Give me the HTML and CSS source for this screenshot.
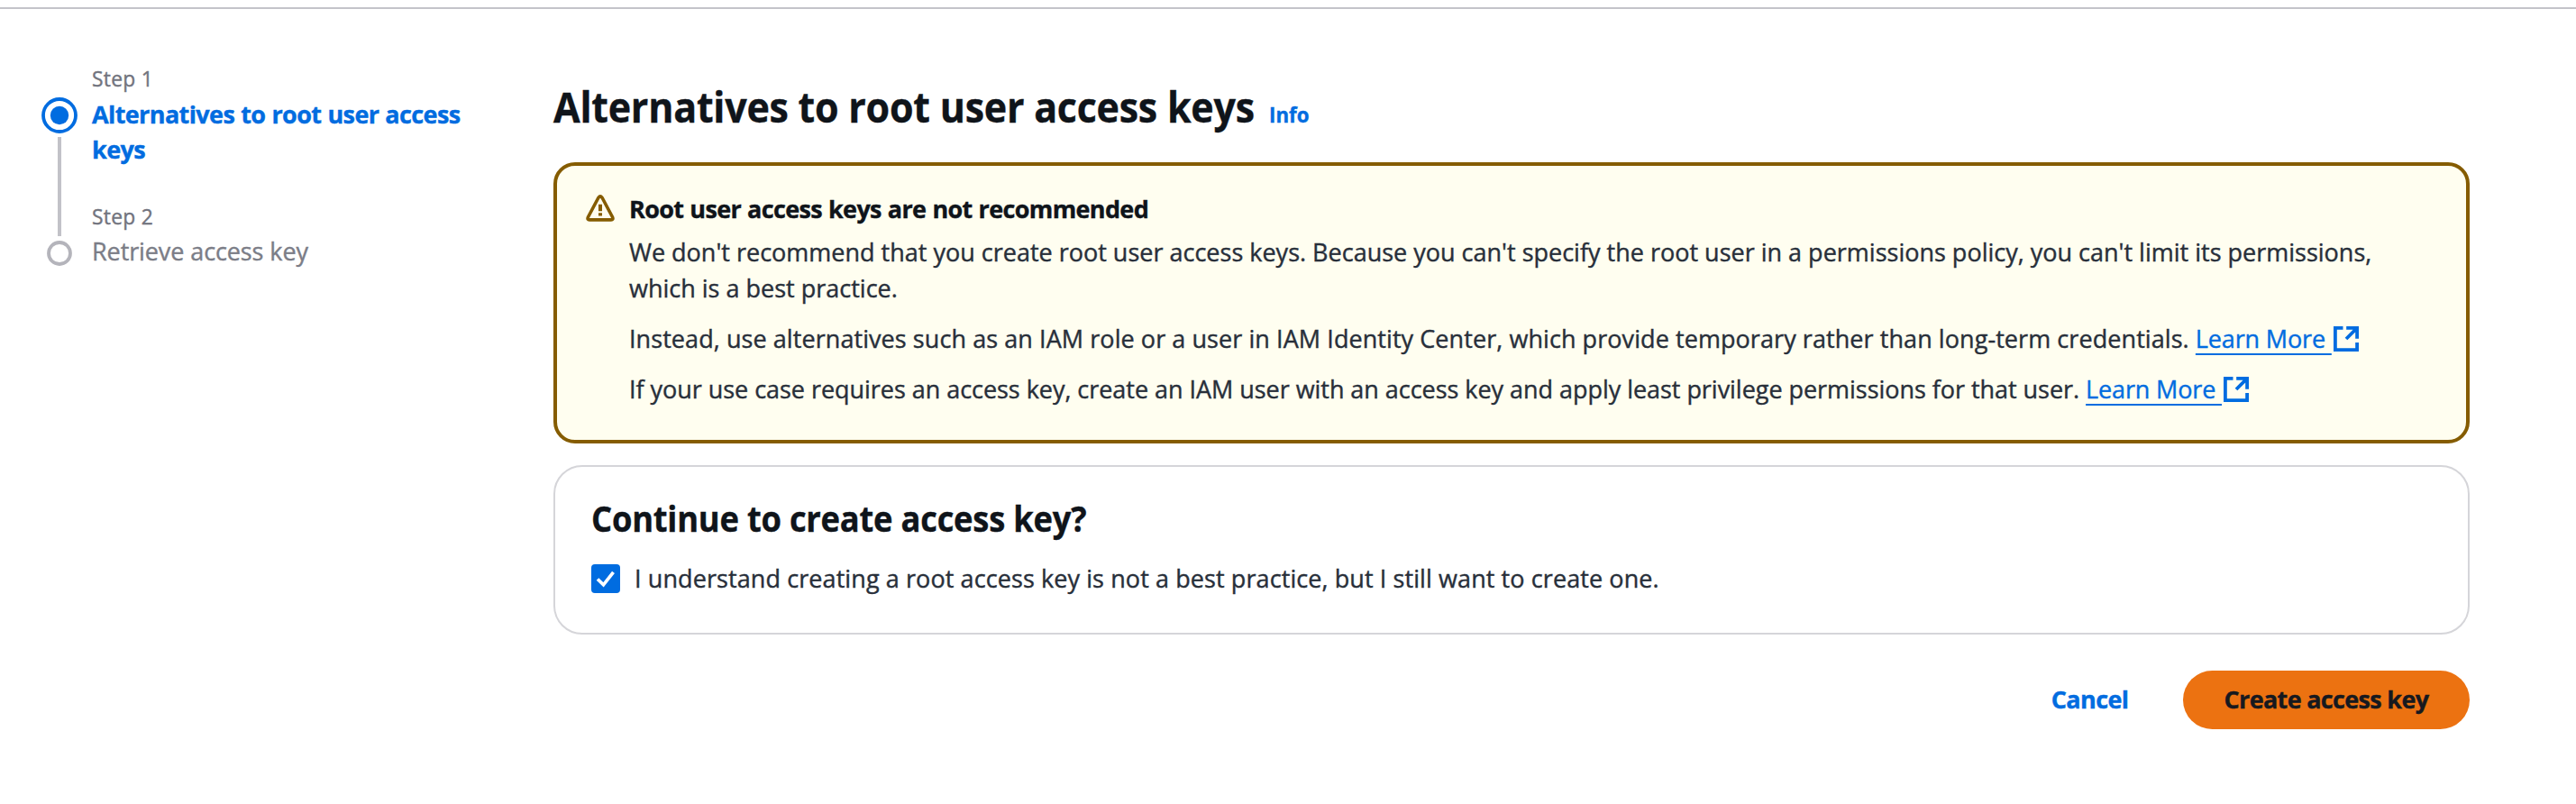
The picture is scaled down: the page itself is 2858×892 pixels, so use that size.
FILE: index.html
```html
<!DOCTYPE html>
<html lang="en">
<head>
<meta charset="utf-8">
<title>Create access key</title>
<link rel="stylesheet" href="styles.css">
</head>
<body>
<div class="topline"></div>
<div class="layout">
  <nav class="steps">
    <div class="step">
      <div class="step-label">Step 1</div>
      <div class="step-marker">
        <svg class="dot-active" viewBox="0 0 40 40"><circle cx="20" cy="20" r="18" fill="none" stroke="#006ce0" stroke-width="3.8"/><circle cx="20" cy="20" r="10.2" fill="#006ce0"/></svg>
        <span class="step-line"></span>
      </div>
      <a class="step-title active">Alternatives to root user access keys</a>
    </div>
    <div class="step">
      <div class="step-label">Step 2</div>
      <div class="step-marker next">
        <svg class="dot" viewBox="0 0 28 28"><circle cx="14" cy="14" r="12" fill="none" stroke="#b4b4bb" stroke-width="3.8"/></svg>
      </div>
      <span class="step-title">Retrieve access key</span>
    </div>
  </nav>
  <main class="main">
    <header class="page-header">
      <h1>Alternatives to root user access keys</h1>
      <a class="info">Info</a>
    </header>
    <section class="alert">
      <svg class="warn" viewBox="0 0 32 32" fill="none" stroke="#855c00"><path stroke-width="3.6" d="M14 4.2Q16 1.5 18 4.2L29.6 26Q30.8 28.9 28 28.9H4Q1.2 28.9 2.4 26Z"/><path stroke-width="4" d="M16 11.7v7.6M16 21.3v3.2"/></svg>
      <div class="alert-body">
        <h2 class="alert-title">Root user access keys are not recommended</h2>
        <p class="p1">We don't recommend that you create root user access keys. Because you can't specify the root user in a permissions policy, you can't limit its permissions, which is a best practice.</p>
        <p class="p2">Instead, use alternatives such as an IAM role or a user in IAM Identity Center, which provide temporary rather than long-term credentials. <a class="link"><span class="u">Learn More&nbsp;</span><svg class="ext" viewBox="0 0 28 28" fill="none" stroke="#006ce0" stroke-width="3.8"><path d="M10.5 1.9H1.9V26.1H26.1V18"/><path d="M14.2 1.9H26.1V13.8M26.1 1.9 14 14"/></svg></a></p>
        <p class="p3">If your use case requires an access key, create an IAM user with an access key and apply least privilege permissions for that user. <a class="link"><span class="u">Learn More&nbsp;</span><svg class="ext" viewBox="0 0 28 28" fill="none" stroke="#006ce0" stroke-width="3.8"><path d="M10.5 1.9H1.9V26.1H26.1V18"/><path d="M14.2 1.9H26.1V13.8M26.1 1.9 14 14"/></svg></a></p>
      </div>
    </section>
    <section class="card">
      <h2 class="card-title">Continue to create access key?</h2>
      <label class="check">
        <svg class="box" viewBox="0 0 32 32"><rect width="32" height="32" rx="4" fill="#006ce0"/><path d="M7 16.5 13.5 22.8 24.5 8.8" fill="none" stroke="#fff" stroke-width="3.7"/></svg>
        <span class="check-text">I understand creating a root access key is not a best practice, but I still want to create one.</span>
      </label>
    </section>
    <footer class="actions">
      <a class="cancel">Cancel</a>
      <button class="primary">Create access key</button>
    </footer>
  </main>
</div>
</body>
</html>
```
FILE: styles.css
```css
* { box-sizing: border-box; }
body {
  margin: 0;
  padding-top: 8px;
  background: #fff;
  color: #282f3a;
  font: 400 27px/39.5px "Open Sans", sans-serif;
  -webkit-text-stroke: .4px currentColor;
}
h1, h2, p { margin: 0; }
.topline { height: 2px; background: #c4c4ca; }
.layout { display: flex; padding-left: 46px; }

.steps { width: 568px; padding-top: 57px; flex: none; }
.step {
  display: grid;
  grid-template-columns: 40px 430px;
  column-gap: 16px;
}
.step + .step { margin-top: 34px; }
.step-label {
  grid-column: 2;
  height: 39px;
  font-size: 22.8px;
  line-height: 41px;
  letter-spacing: .3px;
  color: #72747e;
}
.step-marker {
  display: flex;
  flex-direction: column;
  align-items: center;
  gap: 4px;
  padding-top: 2px;
  height: 79px;
}
.step-marker.next { padding-top: 8px; }
.dot-active { width: 40px; height: 40px; flex: none; }
.dot { width: 28px; height: 28px; flex: none; }
.step-line { width: 4px; height: 110px; flex: none; background: #c2c2c8; }
.step-title { padding-top: .5px; color: #7b7d87; letter-spacing: -.1px; }
.step-title.active {
  color: #006ce0;
  font-weight: 700;
  letter-spacing: -.61px;
  word-spacing: .6px;
}

.main { width: 2126px; padding-top: 78px; }
.page-header { display: flex; align-items: baseline; gap: 17px; height: 92px; }
h1 {
  width: 777px;
  white-space: nowrap;
  font-size: 46.7px;
  line-height: 60px;
  letter-spacing: -.27px;
  color: #0f141a;
  transform: scaleX(.921);
  transform-origin: left;
}
.info { font-size: 22.3px; font-weight: 700; color: #006ce0; }

.alert {
  display: flex;
  height: 312px;
  padding: 28px 40px 0 32px;
  border: 4px solid #855c00;
  border-radius: 24px;
  background: #fffef0;
}
.warn { width: 32px; height: 32px; margin: 3px 16px 0 0; flex: none; }
.alert-title {
  height: 48px;
  font-size: 27px;
  line-height: 39.5px;
  letter-spacing: -.65px;
  word-spacing: .6px;
  color: #0f141a;
}
.p1 { margin-bottom: 16.5px; }
.p2 { margin-bottom: 16.5px; letter-spacing: .07px; }
.p3 { letter-spacing: -.04px; }
.link { color: #006ce0; white-space: nowrap; letter-spacing: -.15px; }
.u {
  text-decoration: underline;
  text-decoration-thickness: 2px;
  text-underline-offset: 6px;
}
.ext { width: 28px; height: 28px; margin-left: 2px; vertical-align: -4px; }

.card {
  height: 188px;
  margin-top: 23.5px;
  padding: 33px 40px;
  border: 2px solid #d5d5d9;
  border-radius: 32px;
}
.card-title {
  height: 73px;
  font-size: 39.4px;
  line-height: 48px;
  letter-spacing: -.27px;
  color: #0f141a;
  transform: scaleX(.923);
  transform-origin: left;
}
.check { display: flex; align-items: flex-start; letter-spacing: .09px; }
.box { width: 32px; height: 32px; margin: 2px 16px 0 0; }
.check-text { margin-top: -2px; }

.actions {
  display: flex;
  justify-content: flex-end;
  align-items: center;
  gap: 60.5px;
  margin-top: 40px;
  height: 65px;
}
.cancel { font-weight: 700; color: #006ce0; letter-spacing: -.6px; }
.primary {
  width: 318px;
  height: 65px;
  padding: 0;
  border: 0;
  border-radius: 33px;
  background: #ec7211;
  color: #16191f;
  font: 700 27px/39.5px "Open Sans", sans-serif;
  letter-spacing: -.68px;
}
```
